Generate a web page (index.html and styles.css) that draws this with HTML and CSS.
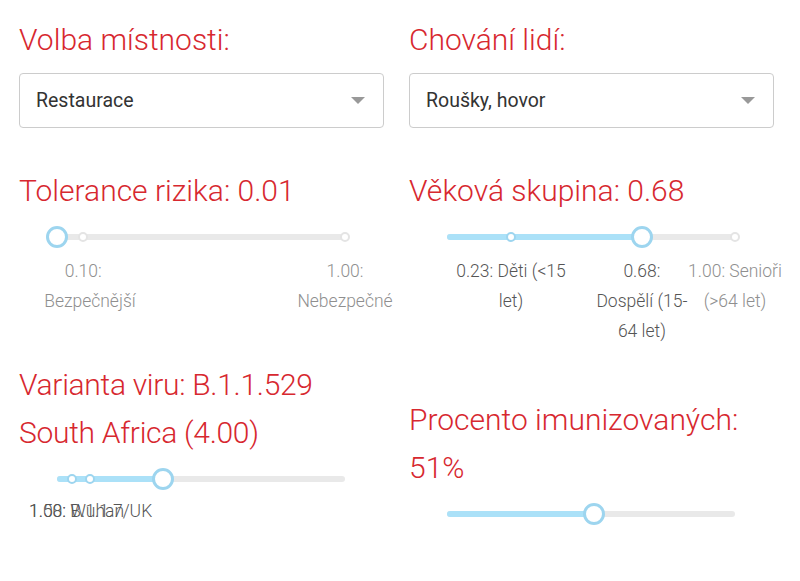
FILE: index.html
```html
<!DOCTYPE html>
<html lang="cs">
<head>
<meta charset="utf-8">
<title>Nastavení</title>
<link rel="stylesheet" href="styles.css">
</head>
<body>
<div class="page">
  <div class="col">
    <h2 class="title">Volba místnosti:</h2>
    <div class="select"><span class="value">Restaurace</span><span class="caret"></span></div>
    <h2 class="title sec">Tolerance rizika: 0.01</h2>
    <div class="slider">
      <div class="rail"></div>
      <span class="dot" style="left:9.09%"></span>
      <span class="dot" style="left:100%"></span>
      <span class="handle" style="left:0%"></span>
    </div>
    <div class="marks two">
      <div class="mark mark-fixed" style="left:9.09%">0.10:<br><span class="nw">Bezpečnější</span></div>
      <div class="mark" style="left:100%">1.00:<br>Nebezpečné</div>
    </div>
    <h2 class="title sec3">Varianta viru: B.1.1.529<br>South Africa (4.00)</h2>
    <div class="slider">
      <div class="rail"></div>
      <div class="track" style="width:36.84%"></div>
      <span class="dot on" style="left:5.26%"></span>
      <span class="dot on" style="left:11.37%"></span>
      <span class="handle" style="left:36.84%"></span>
    </div>
    <div class="marks one">
      <div class="mark mark-virus on">1.00: Wuhan</div>
      <div class="mark mark-virus on">1.58: B.1.1.7/UK</div>
    </div>
  </div>
  <div class="col">
    <h2 class="title">Chování lidí:</h2>
    <div class="select"><span class="value">Roušky, hovor</span><span class="caret"></span></div>
    <h2 class="title sec">Věková skupina: 0.68</h2>
    <div class="slider">
      <div class="rail"></div>
      <div class="track" style="width:67.68%"></div>
      <span class="dot on" style="left:22.22%"></span>
      <span class="dot" style="left:100%"></span>
      <span class="handle" style="left:67.68%"></span>
    </div>
    <div class="marks three">
      <div class="mark on" style="left:22.22%">0.23: Děti (&lt;15<br>let)</div>
      <div class="mark on" style="left:67.68%">0.68:<br>Dospělí (15-<br>64 let)</div>
      <div class="mark" style="left:100%">1.00: Senioři<br>(&gt;64 let)</div>
    </div>
    <h2 class="title sec4">Procento imunizovaných:<br>51%</h2>
    <div class="slider">
      <div class="rail"></div>
      <div class="track" style="width:51%"></div>
      <span class="handle" style="left:51%"></span>
    </div>
  </div>
</div>
</body>
</html>
```

FILE: styles.css
```css
html, body {
  margin: 0;
  padding: 0;
  background: #ffffff;
}
body {
  font-family: Roboto, "Noto Sans", sans-serif;
}
.page {
  display: grid;
  grid-template-columns: 365px 365px;
  column-gap: 25px;
  padding: 16px 0 0 19px;
}
.col {
  display: flex;
  flex-direction: column;
}
.title {
  margin: 0;
  font-weight: 300;
  font-size: 30px;
  line-height: 48px;
  color: #d7282f;
}
.sec3 { letter-spacing: -0.3px; }
.select {
  margin-top: 9px;
  height: 55px;
  box-sizing: border-box;
  border: 1px solid #cccccc;
  border-radius: 4px;
  display: flex;
  align-items: center;
  justify-content: space-between;
  padding: 0 18px 0 16px;
}
.value {
  font-size: 19.5px;
  font-weight: 400;
  color: #333333;
}
.caret {
  width: 0;
  height: 0;
  border-left: 7px solid transparent;
  border-right: 7px solid transparent;
  border-top: 7px solid #999999;
}
.sec { margin-top: 39px; }
.sec3 { margin-top: 45px; }
.sec4 { margin-top: 50px; }
.slider {
  position: relative;
  width: 288px;
  height: 20px;
  margin: 12px 0 0 38px;
}
.rail {
  margin-top: 7px;
  height: 6px;
  border-radius: 3px;
  background: #e9e9e9;
}
.track {
  position: absolute;
  left: 0;
  top: 7px;
  height: 6px;
  border-radius: 3px;
  background: #abe1f8;
}
.dot {
  position: absolute;
  top: 5px;
  width: 10px;
  height: 10px;
  margin-left: -5px;
  box-sizing: border-box;
  border: 2px solid #e4e4e4;
  border-radius: 50%;
  background: #ffffff;
}
.dot.on { border-color: #9dd5ef; }
.handle {
  position: absolute;
  top: -1px;
  width: 22px;
  height: 22px;
  margin-left: -11px;
  box-sizing: border-box;
  border: 3px solid #9dd5ef;
  border-radius: 50%;
  background: #ffffff;
}
.marks {
  position: relative;
  width: 288px;
  margin-left: 38px;
  margin-top: 9px;
}
.marks.one { height: 30px; margin-top: 7px; }
.marks.two { height: 60px; }
.marks.three { height: 90px; }
.mark {
  position: absolute;
  top: 0;
  transform: translateX(-50%);
  width: max-content;
  text-align: center;
  font-size: 17.5px;
  font-weight: 300;
  line-height: 30px;
  color: #8f8f8f;
}
.mark.on { color: #555555; }
.mark-fixed { width: 78px; }
.nw { white-space: nowrap; }
.mark-virus {
  left: -28px;
  transform: none;
  text-align: left;
}
```
